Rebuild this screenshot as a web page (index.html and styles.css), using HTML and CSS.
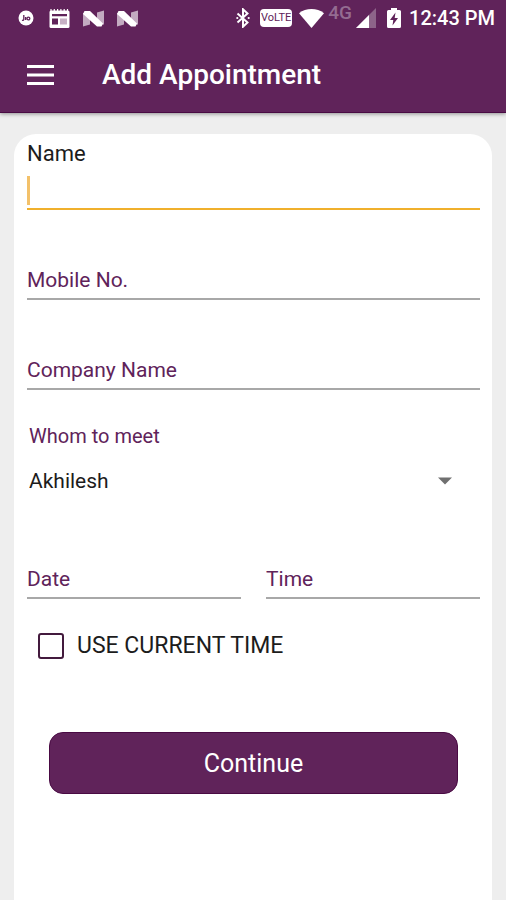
FILE: index.html
```html
<!DOCTYPE html>
<html lang="en">
<head>
<meta charset="utf-8">
<meta name="viewport" content="width=device-width, initial-scale=1">
<title>Add Appointment</title>
<link rel="stylesheet" href="styles.css">
</head>
<body>
<header class="header">
  <div class="status">
    <div class="status-group status-left">
      <svg width="16" height="16" viewBox="0 0 16 16" aria-hidden="true"><circle cx="8" cy="8" r="7.500" fill="#fff"/><path d="M5.800 5v4.200q0 1.500-1.800 1M7.600 7v3M9 8.500a1.300 1.300 0 1 0 2.800 0a1.300 1.300 0 1 0-2.800 0" fill="none" stroke="#60235a" stroke-width="1.300"/></svg>
      <svg width="21" height="19" viewBox="0 0 21 19" aria-hidden="true"><path d="M2 0v3M5.300 0v3M8.600 0v3M11.900 0v3M15.200 0v3M18.500 0v3" stroke="#fff" stroke-width="1.200"/><rect x=".5" y="1.500" width="20" height="17.500" rx="1.500" fill="#fff"/><path d="M3 5h15v2.200H3zM3 9.500h6v6H3z" fill="#60235a"/><path d="M11 9.500h7v6h-7z" fill="#c7b1c5"/></svg>
      <svg width="21" height="17" viewBox="0 0 21 17" aria-hidden="true"><path d="M0 3h7v11.500L0 16.500zM14 2.500L21 .5v14h-7z" fill="#c3abc1"/><path d="M1.500 1H7l13 12.500-1.500 3H14L0 4z" fill="#fff"/></svg>
      <svg width="21" height="17" viewBox="0 0 21 17" aria-hidden="true"><path d="M0 3h7v11.500L0 16.500zM14 2.500L21 .5v14h-7z" fill="#c3abc1"/><path d="M1.500 1H7l13 12.500-1.500 3H14L0 4z" fill="#fff"/></svg>
    </div>
    <div class="status-group status-right">
      <svg width="14" height="20" viewBox="0 0 14 20" aria-hidden="true"><path d="M1.500 5.500l10 9L7 18.700V1.300l4.500 4.200-10 9" fill="none" stroke="#fff" stroke-width="2"/><circle cx="1.300" cy="10" r="1.100" fill="#fff"/><circle cx="12.700" cy="10" r="1.100" fill="#fff"/></svg>
      <span class="volte">VoLTE</span>
      <svg class="wifi" width="25" height="19" viewBox="0 0 25 19" aria-hidden="true"><path d="M0 4.200C7-1.400 18-1.400 25 4.200L12.500 19z" fill="#fff"/></svg>
      <span class="network">4G</span>
      <svg width="20" height="20" viewBox="0 0 20 20" aria-hidden="true"><path d="M0 20L20 0v20z" fill="#8d6489"/><path d="M0 20L13 7v13z" fill="#fff"/></svg>
      <svg class="battery" width="14" height="20" viewBox="0 0 14 20" aria-hidden="true"><path d="M4 0h6v2h2.500q1.500 0 1.500 1.500v15q0 1.500-1.500 1.500h-11Q0 20 0 18.500v-15Q0 2 1.500 2H4z" fill="#fff"/><path d="M8.500 4.500L3 12h3.300l-.8 5.500L11 10H7.700z" fill="#60235a"/></svg>
      <span class="clock">12:43 PM</span>
    </div>
  </div>
  <div class="appbar">
    <button class="menu" type="button" aria-label="Menu">
      <svg width="27" height="20" viewBox="0 0 27 20" aria-hidden="true"><path d="M0 1.500h27M0 10h27M0 18.500h27" stroke="#fff" stroke-width="3"/></svg>
    </button>
    <h1 class="title">Add Appointment</h1>
  </div>
</header>
<main class="page">
  <form class="card">
    <label class="name-label" for="name">Name</label>
    <input class="field field-active" id="name" type="text">
    <input class="field" type="tel" placeholder="Mobile No." aria-label="Mobile No.">
    <input class="field" type="text" placeholder="Company Name" aria-label="Company Name">
    <label class="meet-label" for="meet">Whom to meet</label>
    <div class="select-row">
      <select class="select" id="meet"><option>Akhilesh</option></select>
      <svg class="arrow" width="14" height="8" viewBox="0 0 14 8" aria-hidden="true"><path d="M0 .5h14L7 7.500z" fill="#707070"/></svg>
    </div>
    <div class="columns">
      <input class="field" type="text" placeholder="Date" aria-label="Date">
      <input class="field" type="text" placeholder="Time" aria-label="Time">
    </div>
    <label class="check"><input class="checkbox" type="checkbox">USE CURRENT TIME</label>
    <button class="continue" type="button">Continue</button>
  </form>
</main>
</body>
</html>
```
FILE: styles.css
```css
:root {
  --purple: #60235a;
  --edge: #490a43;
}

* {
  box-sizing: border-box;
}

body {
  margin: 0;
  min-height: 100vh;
  display: flex;
  flex-direction: column;
  background: #eee;
  color: #1c1c1c;
  font-family: Roboto, "Liberation Sans", sans-serif;
}

.header {
  position: relative;
  background: var(--purple);
  border-bottom: 1px solid var(--edge);
  box-shadow: 0 1px 4px rgba(0, 0, 0, 0.4);
  color: #fff;
}

.status {
  display: flex;
  justify-content: space-between;
  height: 36px;
  padding: 0 11px 0 18px;
}

.status-group {
  display: flex;
  align-items: center;
}

.status-left {
  gap: 13px;
}

.status-left svg:first-child {
  margin-right: 2px;
}

.volte {
  margin-left: 10px;
  padding: 0 1px;
  border-radius: 4px;
  background: #fff;
  color: var(--purple);
  font-size: 11px;
  line-height: 18px;
}

.wifi {
  margin-left: 7px;
}

.network {
  align-self: flex-start;
  margin: 4px 4px 0;
  color: #946c91;
  font-size: 19px;
  font-weight: 500;
  line-height: 18px;
}

.battery {
  margin-left: 11px;
}

.clock {
  margin-left: 8px;
  font-size: 20px;
  font-weight: 500;
}

.appbar {
  display: flex;
  align-items: center;
  height: 76px;
  padding: 2px 27px 0;
}

.menu {
  display: flex;
  padding: 0;
  border: 0;
  background: none;
}

.title {
  margin: 0 0 0 48px;
  font-size: 28px;
  font-weight: 500;
  line-height: 32px;
}

.page {
  flex: 1;
  display: flex;
  padding: 21px 14px 0;
}

.card {
  flex: 1;
  display: flex;
  flex-direction: column;
  min-width: 0;
  padding: 8px 12px 24px 13px;
  border-radius: 22px 22px 0 0;
  background: #fff;
}

.name-label {
  font-size: 22px;
  line-height: 24px;
}

.field {
  width: 100%;
  min-width: 0;
  height: 45px;
  margin: 45px 0 0;
  padding: 6px 0 0;
  border: 0;
  border-bottom: 2px solid #a8a8a8;
  border-radius: 0;
  outline: 0;
  background: none;
  color: inherit;
  font: 21px Roboto, "Liberation Sans", sans-serif;
}

.field::placeholder {
  color: var(--purple);
  opacity: 1;
}

.field-active {
  height: 44px;
  margin: 0;
  border-bottom-color: #f0b02c;
  background: linear-gradient(#f3c16a, #f3c16a) 0 10px / 3px 29px no-repeat;
}

.meet-label {
  margin: 34px 0 0 2px;
  color: var(--purple);
  font-size: 20px;
  line-height: 24px;
}

.select-row {
  display: flex;
  align-items: center;
  height: 44px;
  margin: 11px 28px 6px 2px;
}

.select {
  flex: 1;
  padding: 0;
  border: 0;
  appearance: none;
  background: none;
  color: inherit;
  font: 21px Roboto, "Liberation Sans", sans-serif;
}

.arrow {
  margin-left: -14px;
  pointer-events: none;
}

.columns {
  display: grid;
  grid-template-columns: 1fr 1fr;
  gap: 25px;
}

.check {
  display: flex;
  align-items: center;
  gap: 13px;
  margin: 34px 0 0 11px;
  font-size: 23px;
  line-height: 26px;
}

.checkbox {
  width: 26px;
  height: 26px;
  margin: 0;
  border: 2px solid #431a3d;
  border-radius: 3px;
  appearance: none;
}

.checkbox:checked {
  background: var(--purple);
}

.continue {
  height: 62px;
  margin: 73px 22px 0 22px;
  padding: 0;
  border: 1px solid var(--edge);
  border-radius: 14px;
  background: var(--purple);
  color: #fff;
  font: 25px Roboto, "Liberation Sans", sans-serif;
}
```
